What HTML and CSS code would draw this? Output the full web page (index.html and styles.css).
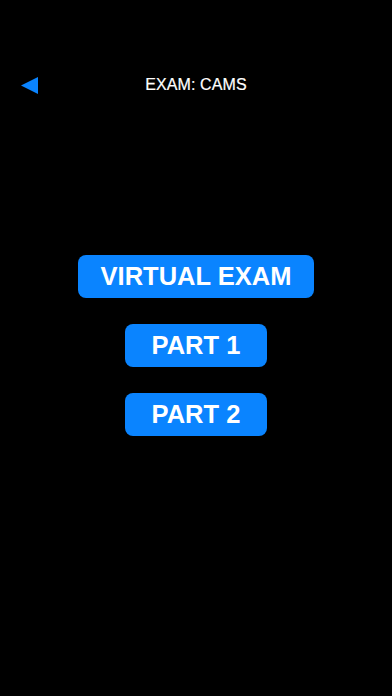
FILE: index.html
```html
<!DOCTYPE html>
<html>
<head>
<meta charset="utf-8">
<link rel="stylesheet" href="styles.css">
</head>
<body>
<div class="screen">
  <header class="header">
    <svg class="back" width="17" height="17" viewBox="0 0 17 17"><polygon points="0,8.5 17,0 17,17" fill="#0a84ff"/></svg>
    <div class="title">EXAM: CAMS</div>
  </header>
  <main class="menu">
    <button class="btn btn-wide">VIRTUAL EXAM</button>
    <button class="btn btn-part">PART 1</button>
    <button class="btn btn-part">PART 2</button>
  </main>
</div>
</body>
</html>
```
FILE: styles.css
```css
html, body {
  margin: 0;
  padding: 0;
  background: #000;
}
.screen {
  width: 392px;
  height: 696px;
  background: #000;
  font-family: "Liberation Sans", Arial, sans-serif;
  display: flex;
  flex-direction: column;
}
.header {
  margin-top: 60px;
  height: 50px;
  position: relative;
  display: flex;
  align-items: center;
  justify-content: center;
}
.back {
  position: absolute;
  left: 21px;
  top: 17px;
}
.title {
  color: #fff;
  font-size: 16px;
  letter-spacing: 0.1px;
  -webkit-text-stroke: 0.2px #fff;
}
.menu {
  padding-top: 145px;
  display: flex;
  flex-direction: column;
  align-items: center;
  gap: 26px;
}
.btn {
  background: #0a84ff;
  color: #fff;
  border: none;
  border-radius: 8px;
  height: 43px;
  font-family: "Liberation Sans", Arial, sans-serif;
  font-weight: bold;
  font-size: 25.5px;
  padding: 0;
  display: flex;
  align-items: center;
  justify-content: center;
}
.btn-wide {
  width: 236px;
}
.btn-part {
  width: 142px;
}
```
